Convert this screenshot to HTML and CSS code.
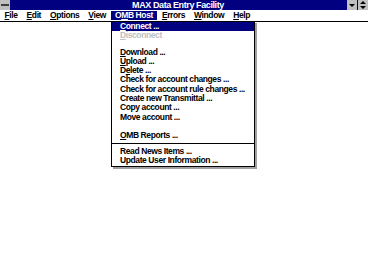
FILE: index.html
```
<!DOCTYPE html>
<html lang="en">
<head>
  <meta charset="UTF-8">
  <title>MAX Data Entry Facility</title>
  <link rel="stylesheet" href="styles.css">
</head>
<body>

  <div class="titlebar">
    <div class="sysbox"><span class="sysbar"></span></div>
    <div class="title">MAX Data Entry Facility</div>
    <div class="tbtn">
      <svg width="10" height="10" viewBox="0 0 10 10"><path d="M2 4h6L5 7z" fill="#000"/></svg>
    </div>
    <div class="tbtn">
      <svg width="10" height="10" viewBox="0 0 10 10"><path d="M5 1L2 4h6zM2 6h6L5 9z" fill="#000"/></svg>
    </div>
  </div>

  <div class="menubar">
    <span class="mitem"><u>F</u>ile</span>
    <span class="mitem"><u>E</u>dit</span>
    <span class="mitem"><u>O</u>ptions</span>
    <span class="mitem"><u>V</u>iew</span>
    <span class="mitem active">O<u>M</u>B Host</span>
    <span class="mitem"><u>E</u>rrors</span>
    <span class="mitem"><u>W</u>indow</span>
    <span class="mitem"><u>H</u>elp</span>
  </div>

  <div class="dropdown">
    <div class="row selected"><u>C</u>onnect ...</div>
    <div class="row disabled"><u>D</u>isconnect</div>
    <div class="gap"></div>
    <div class="row"><u>D</u>ownload ...</div>
    <div class="row"><u>U</u>pload ...</div>
    <div class="row">D<u>e</u>lete ...</div>
    <div class="row">Check for account changes ...</div>
    <div class="row">Check for account rule changes ...</div>
    <div class="row">Create new Transmittal ...</div>
    <div class="row">Copy account ...</div>
    <div class="row">Move account ...</div>
    <div class="gap big"></div>
    <div class="row"><u>O</u>MB Reports ...</div>
    <div class="sep"></div>
    <div class="row">Read News Items ...</div>
    <div class="row">Update User Information ...</div>
  </div>

</body>
</html>
```

FILE: styles.css
```
body {
  margin: 0;
  background: white;
  font-family: "Liberation Sans", Arial, sans-serif;
  font-weight: bold;
  font-size: 8.5px;
  letter-spacing: -0.4px;
  color: black;
}

.titlebar {
  display: flex;
  height: 10px;
  background-color: #000080;
}

.sysbox {
  width: 10px;
  height: 10px;
  background-color: #c0c0c0;
  display: flex;
  align-items: center;
  justify-content: center;
}

.sysbar {
  display: block;
  width: 8px;
  height: 2px;
  background-color: #404040;
}

.title {
  flex: 1;
  color: white;
  text-align: center;
  font-size: 9px;
  line-height: 10px;
}

.tbtn {
  width: 10px;
  height: 10px;
  margin-left: 1px;
  background-color: #c0c0c0;
}

.tbtn svg { display: block; }

.menubar {
  display: flex;
  height: 11px;
  border-bottom: 1px solid black;
  line-height: 11px;
  white-space: nowrap;
}

.mitem {
  padding: 0 4.5px;
}

.mitem.active {
  background-color: #000080;
  color: white;
  margin-top: 1px;
  height: 9px;
  line-height: 9px;
}

.dropdown {
  position: absolute;
  top: 21px;
  left: 111px;
  width: 142px;
  border: 1px solid black;
  background: white;
  box-shadow: 2px 2px 0 #a0a0a0;
}

.row {
  height: 9.3px;
  line-height: 9.3px;
  padding-left: 8px;
  white-space: nowrap;
}

.row.selected {
  background-color: #000080;
  color: white;
}

.row.disabled { color: #c0c0c0; }

.gap { height: 7px; }
.gap.big { height: 9.4px; }

.sep {
  height: 0;
  border-top: 1px solid black;
  margin: 2.5px 0 3px;
}
```
